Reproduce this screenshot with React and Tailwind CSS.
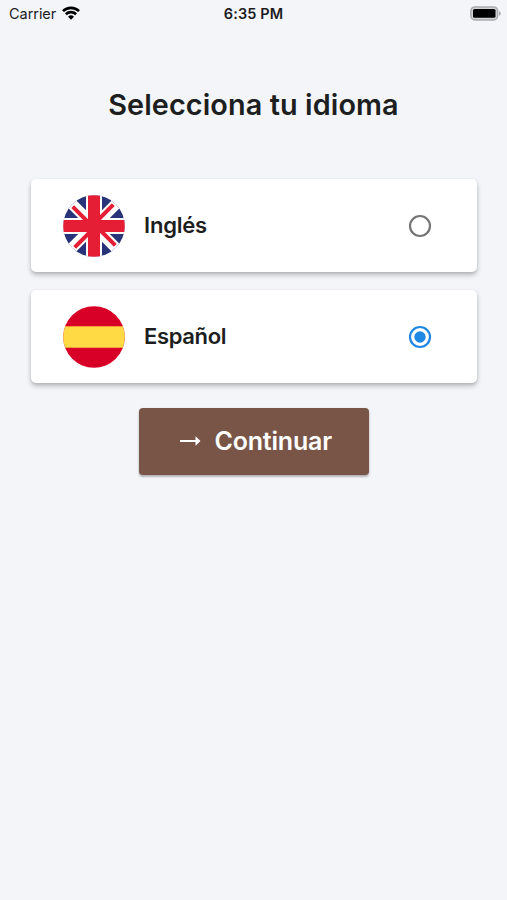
import React, { useState } from 'react';

const UkFlag = () => (
  <svg viewBox="0 0 62 62" className="w-[62px] h-[62px]">
    <defs>
      <clipPath id="uk-circle">
        <circle cx="31" cy="31" r="30.8" />
      </clipPath>
    </defs>
    <g clipPath="url(#uk-circle)">
      <rect width="62" height="62" fill="#29337a" />
      <path d="M0 0L62 62M62 0L0 62" stroke="#fff" strokeWidth="11" />
      <path d="M31 0V62M0 31H62" stroke="#fff" strokeWidth="16" />
      <path d="M9.7 11.7L29 31M33 31L52.3 50.3" stroke="#e51d35" strokeWidth="4" />
      <path d="M50.3 9.7L31 29M31 33L11.7 52.3" stroke="#e51d35" strokeWidth="4" />
      <path d="M31 0V62M0 31H62" stroke="#e51d35" strokeWidth="12" />
    </g>
  </svg>
);

const SpainFlag = () => (
  <svg viewBox="0 0 62 62" className="w-[62px] h-[62px]">
    <defs>
      <clipPath id="es-circle">
        <circle cx="31" cy="31" r="30.8" />
      </clipPath>
    </defs>
    <g clipPath="url(#es-circle)">
      <rect width="62" height="62" fill="#d80027" />
      <rect y="20.3" width="62" height="21.4" fill="#ffda44" />
    </g>
  </svg>
);

const languages = [
  { id: 'en', label: 'Inglés', Flag: UkFlag, text: 'tracking-[-0.2px]' },
  { id: 'es', label: 'Español', Flag: SpainFlag, text: 'tracking-[-0.35px]' },
];

const StatusBar = () => (
  <div className="grid grid-cols-3 items-center h-[27px] pl-[9px] pr-[6px] text-[#1c1c1e]">
    <div className="flex items-center gap-[6px] text-[14.5px] tracking-[-0.05px]">
      <span>Carrier</span>
      <svg viewBox="0 0 18 14" className="w-[18px] h-[14px] -mt-px" fill="none" stroke="#000" strokeWidth="2.7">
        <path d="M1 5.1A11.5 11.5 0 0 1 17 5.1" />
        <path d="M3.9 8.2A7.3 7.3 0 0 1 14.1 8.2" />
        <path d="M9 13.8L6 10.8A4.3 4.3 0 0 1 12 10.8Z" fill="#000" stroke="none" />
      </svg>
    </div>
    <span className="-ml-[3px] text-center text-[14.5px] font-semibold tracking-[0.1px] whitespace-nowrap">6:35 PM</span>
    <svg viewBox="0 0 31 15" className="w-[31px] h-[15px] justify-self-end">
      <rect x="0.9" y="0.9" width="26.7" height="13" rx="4" fill="#d2d3d7" stroke="#a9aaad" strokeWidth="1.5" />
      <rect x="3" y="3" width="22.5" height="8.8" rx="1.6" fill="#000" />
      <path d="M29 5v4.8q1.8-.8 1.8-2.4T29 5Z" fill="#a9aaad" />
    </svg>
  </div>
);

const Radio = ({ checked }) => (
  <svg viewBox="0 0 24 24" className="w-6 h-6" fill="none">
    <circle cx="12" cy="12" r="10" stroke={checked ? '#1e88e5' : '#757575'} strokeWidth="2.2" />
    {checked && <circle cx="12" cy="12" r="5.7" fill="#1e88e5" />}
  </svg>
);

const App = () => {
  const [selected, setSelected] = useState('es');

  return (
    <div className="min-h-screen bg-[#f3f5f9] font-['Inter',sans-serif] text-[#1d1e20]">
      <StatusBar />
      <h1 className="mt-[58px] h-10 text-center text-[28.8px] leading-10 font-semibold tracking-[0.1px] whitespace-nowrap">
        Selecciona tu idioma
      </h1>
      <div className="mt-[54.4px] ml-[31.4px] mr-[30.5px] flex flex-col gap-[18.5px]">
        {languages.map(({ id, label, Flag, text }) => (
          <button
            key={id}
            onClick={() => setSelected(id)}
            className="flex items-center h-[92.5px] pl-[31.6px] pr-[44.5px] bg-white rounded-[5px] shadow-[0_3px_5px_rgba(0,0,0,0.24),0_1px_3px_rgba(0,0,0,0.08)]"
          >
            <Flag />
            <span className={`ml-[19px] text-[22px] font-semibold ${text}`}>{label}</span>
            <span className="ml-auto">
              <Radio checked={selected === id} />
            </span>
          </button>
        ))}
      </div>
      <div className="flex justify-center mt-[25px]">
        <button className="flex items-center w-[230px] h-[67px] pl-[41px] bg-[#795548] text-white rounded-[4px] shadow-[0_2px_2px_rgba(0,0,0,0.2),0_1px_3px_rgba(0,0,0,0.14)]">
          <svg viewBox="0 0 21 12" className="w-[21px] h-3">
            <path d="M0 4.9h15.5V1.2L20.5 6l-5 4.8V7.1H0Z" fill="#fff" />
          </svg>
          <span className="ml-[14px] text-[25px] font-semibold tracking-[-0.2px]">Continuar</span>
        </button>
      </div>
    </div>
  );
};

export default App;
